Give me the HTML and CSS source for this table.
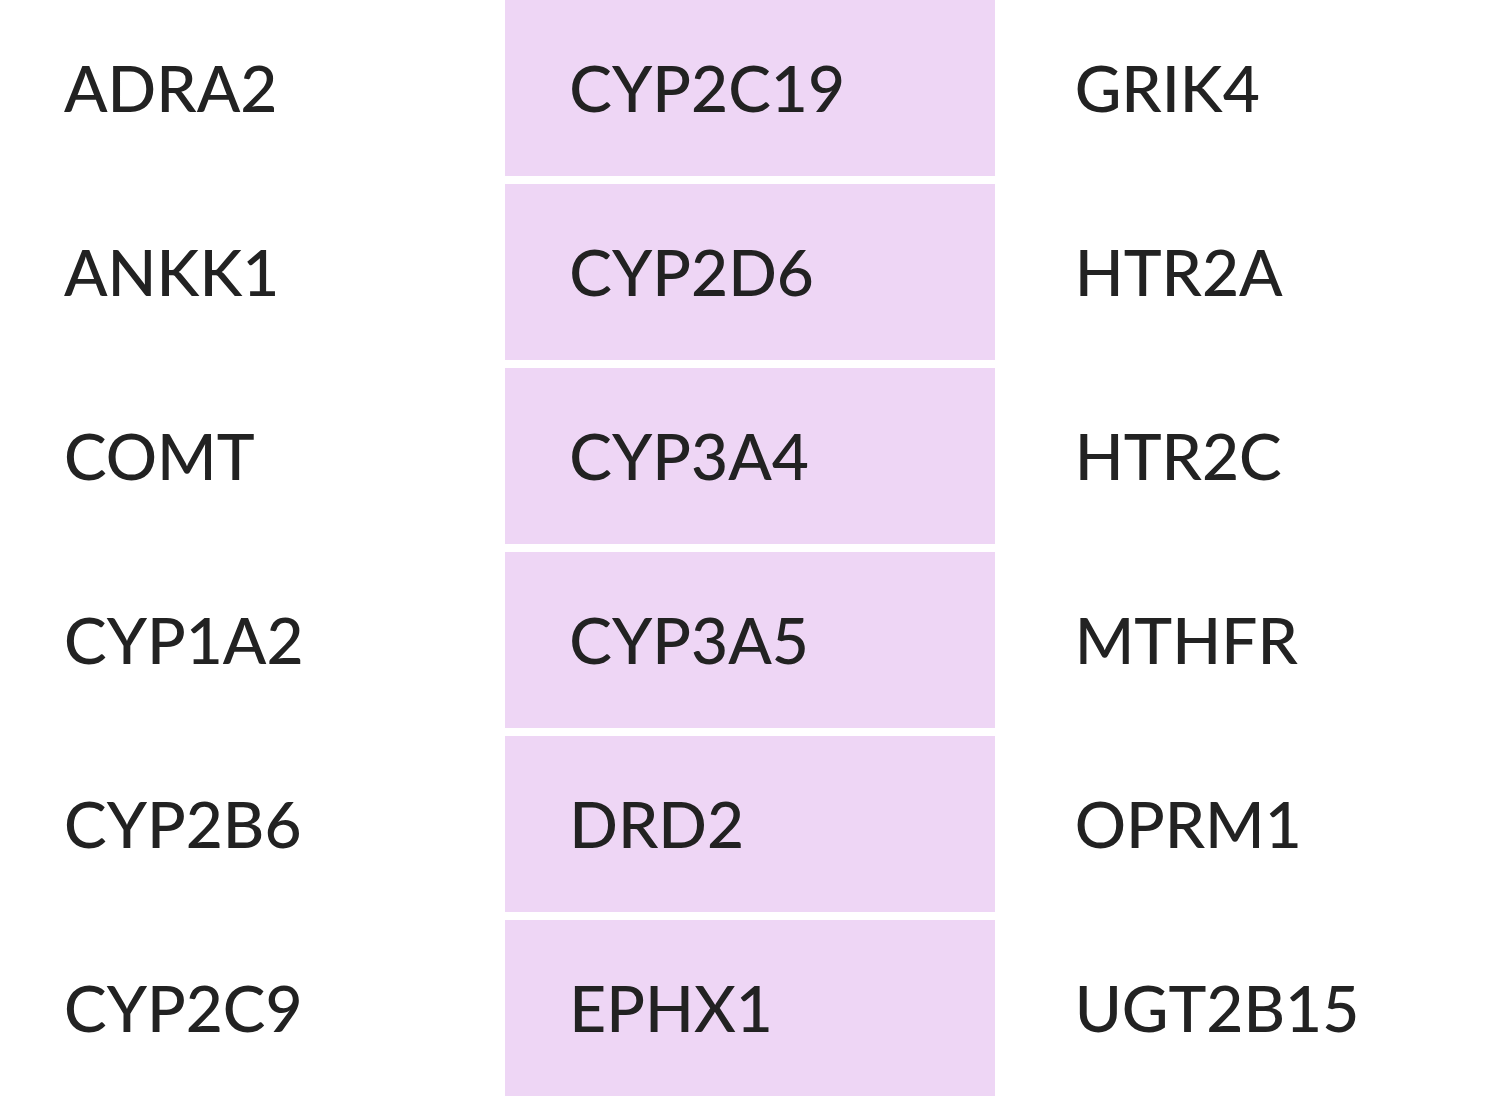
FILE: index.html
```html
<!DOCTYPE html>
<html>
<head>
<meta charset="utf-8">
<link rel="stylesheet" href="styles.css">
</head>
<body>
<div class="grid">
  <div class="cell">ADRA2</div><div class="cell hl">CYP2C19</div><div class="cell">GRIK4</div>
  <div class="cell">ANKK1</div><div class="cell hl">CYP2D6</div><div class="cell">HTR2A</div>
  <div class="cell">COMT</div><div class="cell hl">CYP3A4</div><div class="cell">HTR2C</div>
  <div class="cell">CYP1A2</div><div class="cell hl">CYP3A5</div><div class="cell">MTHFR</div>
  <div class="cell">CYP2B6</div><div class="cell hl">DRD2</div><div class="cell">OPRM1</div>
  <div class="cell">CYP2C9</div><div class="cell hl">EPHX1</div><div class="cell">UGT2B15</div>
</div>
</body>
</html>
```
FILE: styles.css
```css
html, body { margin: 0; padding: 0; background: #fff; }
body { width: 1500px; height: 1096px; overflow: hidden; }
.grid {
  display: grid;
  grid-template-columns: repeat(3, 1fr);
  grid-template-rows: repeat(6, 176px);
  column-gap: 16px;
  row-gap: 8px;
  font-family: Lato, "Open Sans", sans-serif;
  font-size: 64px;
  font-weight: 500;
  color: #222222;
}
.cell {
  display: flex;
  align-items: center;
  padding-left: 64px;
  line-height: 1;
}
.hl { background: #eed6f5; }
```
